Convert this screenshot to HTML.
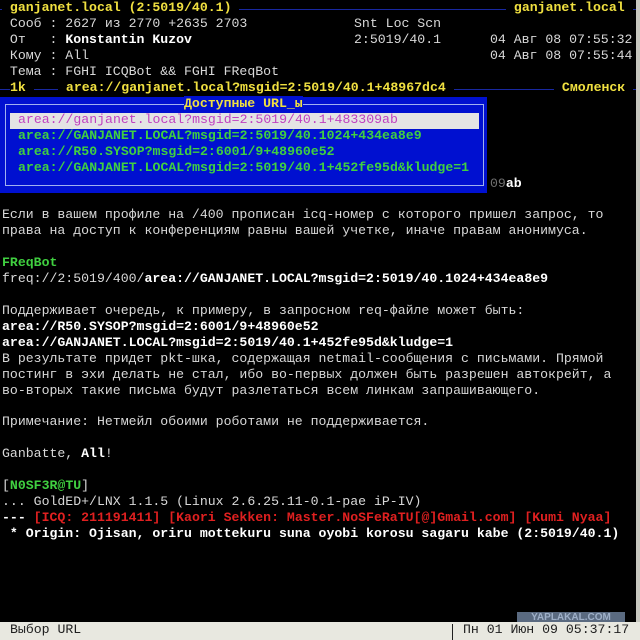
<!DOCTYPE html>
<html><head><meta charset="utf-8"><style>
body{margin:0;width:640px;height:640px;background:#000;overflow:hidden;position:relative;font-family:"Liberation Mono","DejaVu Sans Mono",monospace;font-size:13.2px;color:#d8d8d8}
.r{position:absolute;left:2px;height:16px;line-height:16px;white-space:pre}
.a{position:absolute;height:16px;line-height:16px;white-space:pre}
b{font-weight:bold;color:#fff}
.y{color:#f0e040;font-weight:bold}
.g{color:#40d040;font-weight:bold}
.rd{color:#e02020;font-weight:bold}
.m{color:#c040c0}
.ln{position:absolute;left:0;width:636px;height:1px;background:#1828a0}
.bk{background:#000}
</style></head><body>
<div style="position:absolute;right:0;top:0;width:4px;height:640px;background:#c8c8c0"></div>
<!-- row 0 -->
<div class="ln" style="top:9px"></div>
<div class="a y bk" style="left:2px;top:0"> ganjanet.local (2:5019/40.1) </div>
<div class="a y bk" style="left:506px;top:0"> ganjanet.local </div>
<div class="r" style="top:16px"> Сооб : 2627 из 2770 +2635 2703</div>
<div class="a" style="left:354px;top:16px">Snt Loc Scn</div>
<div class="r" style="top:32px"> От   : <b>Konstantin Kuzov</b></div>
<div class="a" style="left:354px;top:32px">2:5019/40.1</div>
<div class="a" style="left:490px;top:32px">04 Авг 08 07:55:32</div>
<div class="r" style="top:48px"> Кому : All</div>
<div class="a" style="left:490px;top:48px">04 Авг 08 07:55:44</div>
<div class="r" style="top:64px"> Тема : FGHI ICQBot &amp;&amp; FGHI FReqBot</div>
<div class="ln" style="top:89px"></div>
<div class="a y bk" style="left:10px;top:80px">1k </div>
<div class="a y bk" style="left:58px;top:80px"> area://ganjanet.local?msgid=2:5019/40.1+48967dc4 </div>
<div class="a y bk" style="left:554px;top:80px"> Смоленск </div>
<!-- popup -->
<div style="position:absolute;left:0;top:97px;width:487px;height:96px;background:#0010d0"></div>
<div style="position:absolute;left:5px;top:104px;width:477px;height:80px;border:1px solid #a0b0f0"></div>
<div class="a y" style="left:184px;top:96px;background:#0010d0">Доступные URL_ы</div>
<div style="position:absolute;left:10px;top:113px;width:469px;height:16px;background:#e4e4e4"></div>
<div class="a m" style="left:18px;top:112px">area://ganjanet.local?msgid=2:5019/40.1+483309ab</div>
<div class="a g" style="left:18px;top:128px">area://GANJANET.LOCAL?msgid=2:5019/40.1024+434ea8e9</div>
<div class="a g" style="left:18px;top:144px">area://R50.SYSOP?msgid=2:6001/9+48960e52</div>
<div class="a g" style="left:18px;top:160px">area://GANJANET.LOCAL?msgid=2:5019/40.1+452fe95d&amp;kludge=1</div>
<div class="a" style="left:490px;top:176px"><span style="color:#707070">09</span><b>ab</b></div>
<!-- body -->
<div class="r" style="top:207px">Если в вашем профиле на /400 прописан icq-номер с которого пришел запрос, то</div>
<div class="r" style="top:223px">права на доступ к конференциям равны вашей учетке, иначе правам анонимуса.</div>
<div class="r g" style="top:255px">FReqBot</div>
<div class="r" style="top:271px">freq://2:5019/400/<b>area://GANJANET.LOCAL?msgid=2:5019/40.1024+434ea8e9</b></div>
<div class="r" style="top:303px">Поддерживает очередь, к примеру, в запросном req-файле может быть:</div>
<div class="r" style="top:319px"><b>area://R50.SYSOP?msgid=2:6001/9+48960e52</b></div>
<div class="r" style="top:335px"><b>area://GANJANET.LOCAL?msgid=2:5019/40.1+452fe95d&amp;kludge=1</b></div>
<div class="r" style="top:351px">В результате придет pkt-шка, содержащая netmail-сообщения с письмами. Прямой</div>
<div class="r" style="top:367px">постинг в эхи делать не стал, ибо во-первых должен быть разрешен автокрейт, а</div>
<div class="r" style="top:383px">во-вторых такие письма будут разлетаться всем линкам запрашивающего.</div>
<div class="r" style="top:414px">Примечание: Нетмейл обоими роботами не поддерживается.</div>
<div class="r" style="top:446px">Ganbatte, <b>All</b>!</div>
<div class="r" style="top:478px">[<span class="g">N0SF3R@TU</span>]</div>
<div class="r" style="top:494px">... GoldED+/LNX 1.1.5 (Linux 2.6.25.11-0.1-pae iP-IV)</div>
<div class="r" style="top:510px"><b>---</b> <span class="rd">[ICQ: 211191411] [Kaori Sekken: Master.NoSFeRaTU[@]Gmail.com] [Kumi Nyaa]</span></div>
<div class="r" style="top:526px"><b> * Origin: Ojisan, oriru mottekuru suna oyobi korosu sagaru kabe (2:5019/40.1)</b></div>
<!-- watermark -->
<div style="position:absolute;left:517px;top:612px;width:108px;height:11px;background:#5a6a80;color:#9fb0c8;font:bold 10px 'Liberation Sans',sans-serif;text-align:center;line-height:11px">YAPLAKAL.COM</div>
<!-- status -->
<div style="position:absolute;left:0;top:622px;width:640px;height:18px;background:#e8e8e0"></div>
<div class="a" style="left:10px;top:622px;color:#202020">Выбор URL</div>
<div style="position:absolute;left:452px;top:624px;width:1px;height:16px;background:#202020"></div>
<div class="a" style="left:463px;top:622px;color:#202020">Пн 01 Июн 09 05:37:17</div>
</body></html>
